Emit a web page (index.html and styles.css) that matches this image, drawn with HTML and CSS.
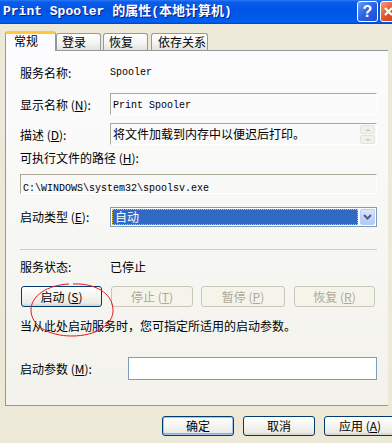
FILE: index.html
```html
<!DOCTYPE html>
<html lang="zh-CN">
<head>
    <meta charset="UTF-8">
    <title>Print Spooler 的属性</title>
    <link rel="stylesheet" href="styles.css">
</head>
<body>
<div class="titlebar">
    <span class="title-text">Print Spooler 的属性(本地计算机)</span>
    <div class="title-buttons">
        <span class="tb-help">?</span>
        <span class="tb-close">
            <svg width="12" height="13" viewBox="0 0 12 13"><path d="M3 3 L10 10 M10 3 L3 10" stroke="#fff" stroke-width="2.2"/></svg>
        </span>
    </div>
</div>

<div class="dialog">
    <div class="tabs">
        <div class="tab active">常规</div>
        <div class="tab t-login">登录</div>
        <div class="tab t-recover">恢复</div>
        <div class="tab t-deps">依存关系</div>
    </div>

    <div class="panel">
        <div class="row r-name">
            <span class="label">服务名称:</span>
            <span class="en">Spooler</span>
        </div>

        <div class="row r-display">
            <span class="label">显示名称 (<u>N</u>):</span>
            <div class="ro-box"><span class="en">Print Spooler</span></div>
        </div>

        <div class="row r-desc">
            <span class="label">描述 (<u>D</u>):</span>
            <div class="ro-box desc-box">
                <span>将文件加载到内存中以便迟后打印。</span>
                <div class="mini-scroll">
                    <span class="sb-btn"><i class="tri-up"></i></span>
                    <span class="sb-btn"><i class="tri-down"></i></span>
                </div>
            </div>
        </div>

        <div class="row r-pathlabel">
            <span>可执行文件的路径 (<u>H</u>):</span>
        </div>

        <div class="ro-box path-box"><span class="en">C:\WINDOWS\system32\spoolsv.exe</span></div>

        <div class="row r-type">
            <span class="label">启动类型 (<u>E</u>):</span>
            <div class="combo">
                <div class="combo-sel">自动</div>
                <div class="combo-btn">
                    <svg width="9" height="6" viewBox="0 0 9 6"><path d="M1 1 L4.5 4.5 L8 1" stroke="#4D6185" stroke-width="2" fill="none"/></svg>
                </div>
            </div>
        </div>

        <div class="separator"></div>

        <div class="row r-status">
            <span class="label">服务状态:</span>
            <span>已停止</span>
        </div>

        <div class="svc-buttons">
            <button class="btn b-start">启动 (<u>S</u>)</button>
            <button class="btn b-stop" disabled>停止 (<u>T</u>)</button>
            <button class="btn b-pause" disabled>暂停 (<u>P</u>)</button>
            <button class="btn b-resume" disabled>恢复 (<u>R</u>)</button>
            <!-- red mark drawn around the start button -->
            <svg class="mark" width="86" height="56" viewBox="0 0 86 56">
                <path d="M44 2 C66 1 83 11 84 27 C85 43 67 54 43 54 C20 54 2 44 2 28 C2 14 18 3 40 2" fill="none" stroke="#E8141B" stroke-width="1"/>
            </svg>
        </div>

        <div class="row r-hint">
            <span>当从此处启动服务时，您可指定所适用的启动参数。</span>
        </div>

        <div class="row r-params">
            <span class="label wide">启动参数 (<u>M</u>):</span>
            <div class="edit"></div>
        </div>
    </div>

    <div class="dlg-buttons">
        <button class="btn default">确定</button>
        <button class="btn">取消</button>
        <button class="btn">应用 (<u>A</u>)</button>
    </div>
</div>
</body>
</html>
```

FILE: styles.css
```css
body {
    margin: 0;
    padding: 0;
    background-color: #ECE9D8;
    font-family: "Noto Sans CJK SC", sans-serif;
    font-size: 12px;
    line-height: 14px;
    color: #000;
    overflow: hidden;
}

u {
    text-decoration: underline;
}

.en {
    font-family: "Liberation Mono", monospace;
    font-size: 10px;
}

/* title bar */
.titlebar {
    height: 24px;
    display: flex;
    align-items: center;
    background: linear-gradient(to bottom, #2D7BF4 0%, #0A5DEC 8%, #0055E5 40%, #005AEB 80%, #0062F4 90%, #0044C8 100%);
    position: relative;
}

.title-text {
    color: #fff;
    font-family: "Liberation Mono", "Noto Sans CJK SC", monospace;
    font-weight: bold;
    font-size: 13px;
    padding-left: 3px;
    letter-spacing: 0;
    text-shadow: 1px 1px 0 #0A1E8C;
}

.title-buttons {
    position: absolute;
    top: 1px;
    left: 357px;
    display: flex;
    gap: 2px;
}

.tb-help, .tb-close {
    width: 19px;
    height: 19px;
    border: 1px solid #fff;
    border-radius: 3px;
    display: flex;
    align-items: center;
    justify-content: center;
    color: #fff;
    font-family: "Liberation Sans", sans-serif;
    font-weight: bold;
    font-size: 16px;
}

.tb-help {
    background: linear-gradient(135deg, #6A9CF8 0%, #2A62E4 50%, #1E4FD4 100%);
}

.tb-close {
    background: linear-gradient(135deg, #F29A7A 0%, #E0512A 50%, #C8361A 100%);
    justify-content: flex-start;
    padding-left: 1px;
}

/* dialog body */
.dialog {
    padding: 7px 0 0 5px;
}

.tabs {
    display: flex;
    align-items: flex-end;
    height: 20px;
    position: relative;
    z-index: 2;
    margin-bottom: -1px;
}

.tab {
    height: 17px;
    box-sizing: border-box;
    border: 1px solid #919B9C;
    border-bottom: none;
    border-radius: 3px 3px 0 0;
    background: linear-gradient(to bottom, #FFFFFF 0%, #F3F3EF 60%, #E3E2DA 100%);
    padding: 1px 0 0 5px;
    margin-bottom: 1px;
}

.tab.active {
    height: 20px;
    width: 51px;
    margin-bottom: 0;
    background: #FCFCFE;
    border-top: 3px solid #FFC83C;
    padding: 0 0 0 8px;
    border-radius: 3px 3px 0 0;
}

.t-login { width: 45px; }
.t-recover { width: 45px; margin-left: 2px; }
.t-deps { width: 57px; margin-left: 3px; padding-left: 6px; }

.panel {
    width: 383px;
    height: 356px;
    box-sizing: border-box;
    border: 1px solid #919B9C;
    border-right: none;
    background: linear-gradient(to bottom, #FCFCFE 0%, #F7F7F4 50%, #F3F2EC 100%);
    padding: 12px 0 0 14px;
}

.row {
    display: flex;
    align-items: center;
}

.label {
    width: 90px;
    flex-shrink: 0;
}

.label.wide {
    width: 108px;
}

.r-name { height: 20px; }

.r-display, .r-desc {
    align-items: flex-start;
    margin-top: 10px;
}

.r-display .label, .r-desc .label {
    padding-top: 5px;
}

.r-desc { margin-top: 8px; }

.ro-box {
    width: 267px;
    height: 22px;
    box-sizing: border-box;
    border-top: 1px solid #ACA899;
    border-left: 1px solid #ACA899;
    border-right: 1px solid #fff;
    border-bottom: 1px solid #fff;
    padding: 2px 0 0 2px;
}

.desc-box {
    display: flex;
    justify-content: space-between;
    padding-top: 3px;
}

.mini-scroll {
    display: flex;
    flex-direction: column;
    gap: 1px;
    margin: -2px 1px 0 0;
}

.sb-btn {
    width: 15px;
    height: 9px;
    box-sizing: border-box;
    border: 1px solid #E6E4DA;
    border-radius: 2px;
    background: #F1F0EA;
    display: flex;
    align-items: center;
    justify-content: center;
}

.tri-up, .tri-down {
    width: 0;
    height: 0;
    border-left: 3px solid transparent;
    border-right: 3px solid transparent;
}

.tri-up { border-bottom: 2px solid #C9C7BA; }
.tri-down { border-top: 2px solid #C9C7BA; }

.r-pathlabel {
    height: 14px;
    margin-top: 6px;
}

.path-box {
    width: 357px;
    height: 20px;
    margin-top: 9px;
    padding-top: 4px;
}

.r-type { margin-top: 13px; }

.combo {
    width: 267px;
    height: 20px;
    box-sizing: border-box;
    border: 1px solid #7F9DB9;
    background: #fff;
    display: flex;
    align-items: center;
    padding: 1px;
}

.combo-sel {
    flex: 1;
    height: 16px;
    box-sizing: border-box;
    background: #316AC5;
    color: #fff;
    border: 1px dotted #E8C050;
    padding-left: 2px;
    line-height: 14px;
}

.combo-btn {
    width: 15px;
    height: 16px;
    margin-left: 2px;
    box-sizing: border-box;
    border: 1px solid #B9CDF9;
    border-radius: 2px;
    background: linear-gradient(to bottom, #DCE6FD 0%, #C1D3FB 60%, #B4C8F6 100%);
    display: flex;
    align-items: center;
    justify-content: center;
}

.separator {
    width: 357px;
    height: 1px;
    margin-top: 22px;
    background: #D0D0BF;
}

.r-status {
    height: 14px;
    margin-top: 10px;
}

.svc-buttons {
    display: flex;
    margin-top: 12px;
    position: relative;
}

.btn {
    height: 21px;
    box-sizing: border-box;
    border: 1px solid #003C74;
    border-radius: 3px;
    background: linear-gradient(to bottom, #FFFFFF 0%, #F4F4F0 50%, #ECEBE6 85%, #D6D0C5 100%);
    font-family: "Noto Sans CJK SC", sans-serif;
    font-size: 12px;
    line-height: 14px;
    color: #000;
    padding: 0;
}

.btn:disabled {
    border-color: #C9C7BA;
    background: #F5F4EA;
    color: #ACA899;
}

.b-start { width: 81px; margin-left: 1px; }
.b-stop { width: 82px; margin-left: 9px; }
.b-pause { width: 84px; margin-left: 8px; }
.b-resume { width: 81px; margin-left: 9px; }

.mark {
    position: absolute;
    left: 9px;
    top: -4px;
}

.r-hint {
    height: 14px;
    margin-top: 12px;
}

.r-params {
    margin-top: 24px;
}

.edit {
    width: 249px;
    height: 23px;
    box-sizing: border-box;
    border: 1px solid #7F9DB9;
    background: #fff;
}

.dlg-buttons {
    display: flex;
    gap: 9px;
    padding-left: 157px;
    margin-top: 10px;
}

.dlg-buttons .btn {
    width: 72px;
    height: 20px;
    flex-shrink: 0;
}

.dlg-buttons .btn.default {
    box-shadow: inset 0 0 0 1px #A8C4F0, inset 0 -1px 0 1px #89ADE4;
}
```
